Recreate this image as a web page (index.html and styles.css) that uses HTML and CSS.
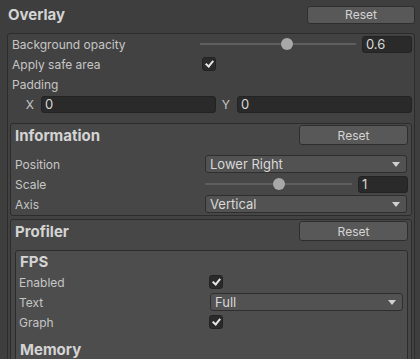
FILE: index.html
```html
<!DOCTYPE html>
<html lang="en">
<head>
  <meta charset="UTF-8">
  <title>Overlay Settings</title>
  <link rel="stylesheet" href="styles.css">
</head>
<body>
  <!-- Overlay -->
  <div class="section-head top">
    <span class="title">Overlay</span>
    <button class="btn reset-top">Reset</button>
  </div>

  <div class="panel overlay">
    <div class="row">
      <span class="label">Background opacity</span>
      <div class="slider s-overlay"><div class="track"></div><div class="knob" style="left: 56%"></div></div>
      <div class="field num">0.6</div>
    </div>
    <div class="row">
      <span class="label">Apply safe area</span>
      <div class="check c-overlay"></div>
    </div>
    <div class="row">
      <span class="label">Padding</span>
    </div>
    <div class="row pad-row">
      <span class="axis-label">X</span>
      <div class="field wide">0</div>
      <span class="axis-label y">Y</span>
      <div class="field wide">0</div>
    </div>

    <!-- Information -->
    <div class="panel sub">
      <div class="section-head">
        <span class="title">Information</span>
        <button class="btn">Reset</button>
      </div>
      <div class="row">
        <span class="label">Position</span>
        <div class="dropdown">Lower Right<span class="arrow"></span></div>
      </div>
      <div class="row">
        <span class="label">Scale</span>
        <div class="slider s-info"><div class="track"></div><div class="knob" style="left: 50%"></div></div>
        <div class="field num">1</div>
      </div>
      <div class="row">
        <span class="label">Axis</span>
        <div class="dropdown">Vertical<span class="arrow"></span></div>
      </div>
    </div>

    <!-- Profiler -->
    <div class="panel sub profiler">
      <div class="section-head">
        <span class="title">Profiler</span>
        <button class="btn">Reset</button>
      </div>
      <div class="panel inner">
        <div class="group-title">FPS</div>
        <div class="row">
          <span class="label">Enabled</span>
          <div class="check c-inner"></div>
        </div>
        <div class="row">
          <span class="label">Text</span>
          <div class="dropdown d-inner">Full<span class="arrow"></span></div>
        </div>
        <div class="row">
          <span class="label">Graph</span>
          <div class="check c-inner"></div>
        </div>
        <div class="group-title memory">Memory</div>
      </div>
    </div>
  </div>
</body>
</html>
```

FILE: styles.css
```css
/* General */
body {
  margin: 0;
  background: #3e3e3e;
  font-family: 'Inter', 'Noto Sans', sans-serif;
  font-size: 12px;
  color: #c6c6c6;
  overflow: hidden;
  height: 359px;
}

.panel {
  border: 1px solid #2c2c2c;
  border-radius: 3px;
  box-sizing: border-box;
}

/* Section headers */
.section-head {
  display: flex;
  align-items: center;
  justify-content: space-between;
  height: 22px;
  margin-bottom: 8px;
}

.section-head.top {
  height: 29px;
  padding: 0 5px 0 8px;
  margin-bottom: 4px;
}

.title {
  font-size: 15px;
  font-weight: bold;
  color: #d4d4d4;
}

.btn {
  font-family: inherit;
  font-size: 12px;
  color: #d4d4d4;
  background: #585858;
  border: 1px solid #2e2e2e;
  border-radius: 3px;
  width: 109px;
  height: 20px;
  padding: 0;
}

.sub .btn {
  margin-right: 1px;
}

.btn.reset-top {
  width: 108px;
  height: 18px;
}

/* Overlay panel */
.overlay {
  margin-left: 7px;
  width: 408px;
  background: #424242;
  padding: 0 2px;
  height: 400px;
}

.row {
  display: flex;
  align-items: center;
  height: 20px;
  padding-left: 2px;
}

.label {
  width: 188px;
  flex: none;
}

/* Slider */
.slider {
  position: relative;
  height: 20px;
  flex: none;
}

.slider .track {
  position: absolute;
  left: 0;
  right: 0;
  top: 9px;
  height: 2px;
  background: #5e5e5e;
}

.slider .knob {
  position: absolute;
  top: 4px;
  width: 12px;
  height: 12px;
  margin-left: -6px;
  border-radius: 50%;
  background: #a8a8a8;
}

.s-overlay {
  width: 156px;
  margin-right: 6px;
}

.s-info {
  width: 147px;
  margin-right: 6px;
}

/* Fields */
.field {
  background: #2a2a2a;
  border: 1px solid #232323;
  border-radius: 3px;
  height: 17px;
  box-sizing: border-box;
  padding-left: 3px;
  line-height: 15px;
  color: #d8d8d8;
  font-size: 13px;
}

.field.num {
  width: 50px;
}

.pad-row {
  padding-left: 0;
}

.axis-label {
  width: 31px;
  text-align: right;
  padding-right: 7px;
  box-sizing: border-box;
  flex: none;
}

.axis-label.y {
  width: 21px;
}

.field.wide {
  width: 175px;
}

/* Checkbox */
.check {
  width: 14px;
  height: 14px;
  box-sizing: border-box;
  background: #2a2a2a;
  border: 1px solid #222;
  border-radius: 3px;
  position: relative;
  flex: none;
}

.check::after {
  content: '';
  position: absolute;
  left: 4px;
  top: 1px;
  width: 3px;
  height: 6px;
  border: solid #e6e6e6;
  border-width: 0 2px 2px 0;
  transform: rotate(40deg);
}

.c-overlay {
  margin-left: 2px;
}

/* Sub panels */
.sub {
  margin-top: 9px;
  width: 402px;
  background: #474747;
  padding: 0 2px 1px 4px;
}

.sub .row {
  padding-left: 0;
}

.sub .label {
  width: 190px;
}

.profiler {
  margin-top: 3px;
  height: 200px;
}

/* Dropdown */
.dropdown {
  position: relative;
  width: 202px;
  height: 18px;
  box-sizing: border-box;
  background: #525252;
  border: 1px solid #2e2e2e;
  border-radius: 3px;
  padding-left: 4px;
  line-height: 16px;
  color: #d8d8d8;
  font-size: 13px;
}

.dropdown .arrow {
  position: absolute;
  right: 6px;
  top: 6px;
  border-left: 4px solid transparent;
  border-right: 4px solid transparent;
  border-top: 5px solid #d0d0d0;
}

.d-inner {
  width: 193px;
  margin-left: 1px;
}

/* Inner panel */
.inner {
  margin-top: 1px;
  background: #4d4d4d;
  padding: 1px 0 0 3px;
  width: 393px;
  height: 150px;
}

.group-title {
  font-size: 15px;
  font-weight: bold;
  color: #d4d4d4;
  height: 20px;
  line-height: 20px;
  padding-left: 1px;
}

.group-title.memory {
  margin-top: 8px;
}
```
